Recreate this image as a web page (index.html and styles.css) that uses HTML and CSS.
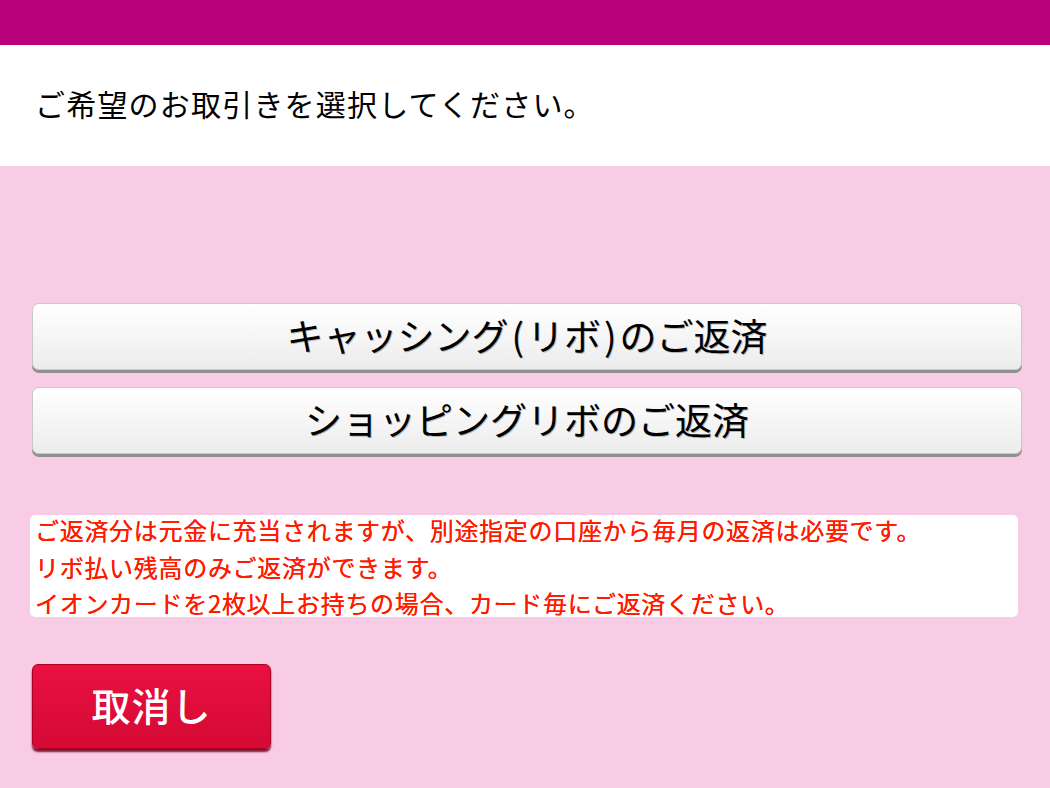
FILE: index.html
```html
<!DOCTYPE html>
<html lang="ja">
<head>
<meta charset="utf-8">
<title>お取引選択</title>
<link rel="stylesheet" href="styles.css">
</head>
<body>
<div class="topbar"></div>
<header class="header">
  <h1 class="title">ご希望のお取引きを選択してください。</h1>
</header>
<main class="main">
  <div class="choices">
    <button class="choice">キャッシング<span class="paren">(</span>リボ<span class="paren">)</span>のご返済</button>
    <button class="choice">ショッピングリボのご返済</button>
  </div>
  <div class="notice">
    <div class="notice-text">
      <p>ご返済分は元金に充当されますが、別途指定の口座から毎月の返済は必要です。</p>
      <p>リボ払い残高のみご返済ができます。</p>
      <p>イオンカードを2枚以上お持ちの場合、カード毎にご返済ください。</p>
    </div>
  </div>
  <button class="cancel">取消し</button>
</main>
</body>
</html>
```
FILE: styles.css
```css
html, body {
  margin: 0;
  padding: 0;
}
body {
  width: 1050px;
  height: 788px;
  overflow: hidden;
  background: #f9cce6;
  font-family: "Noto Sans CJK JP", "Noto Sans", sans-serif;
}
.topbar {
  height: 45px;
  background: #b8007b;
}
.header {
  background: #ffffff;
  height: 121px;
  display: flex;
  align-items: center;
  padding-left: 35px;
}
.title {
  margin: 0;
  font-size: 30px;
  font-weight: 400;
  color: #000;
  letter-spacing: 1.2px;
  padding-bottom: 6px;
}
.main {
  padding: 137px 29px 0 30px;
}
.choices {
  display: flex;
  flex-direction: column;
  gap: 17px;
  padding-left: 2px;
}
.choice {
  height: 67px;
  width: 990px;
  border: 1px solid #c8c8c8;
  border-radius: 7px;
  background: linear-gradient(#ffffff, #ececec);
  box-shadow: 0 3px 0 #8f8f8f;
  font-family: inherit;
  font-size: 37px;
  font-weight: 400;
  color: #000;
  padding: 0 0 4px;
  text-shadow: 1px 1px 0 rgba(0,0,0,0.25);
}
.paren {
  margin: 0 3px;
}
.notice {
  margin-top: 61px;
  width: 988px;
  background: #fff;
  border-radius: 5px;
  padding: 0 0 0 5px;
  box-sizing: border-box;
  height: 102px;
  color: #ff1a00;
  font-size: 24px;
  font-weight: 400;
}
.notice-text {
  position: relative;
  top: -3px;
}
.notice p {
  margin: 0;
  line-height: 36.5px;
  letter-spacing: 0.7px;
  text-shadow: 0 0 0.4px #ff1a00;
}
.cancel {
  margin-top: 47px;
  margin-left: 2px;
  width: 239px;
  height: 85px;
  border: 1px solid #b00022;
  border-radius: 6px;
  background: linear-gradient(#ea1040, #d40a34);
  box-shadow: 0 3px 2px #7a1a30;
  color: #fff;
  font-family: inherit;
  font-size: 39px;
  font-weight: 500;
  letter-spacing: 1px;
  padding: 0 0 6px;
}
```
